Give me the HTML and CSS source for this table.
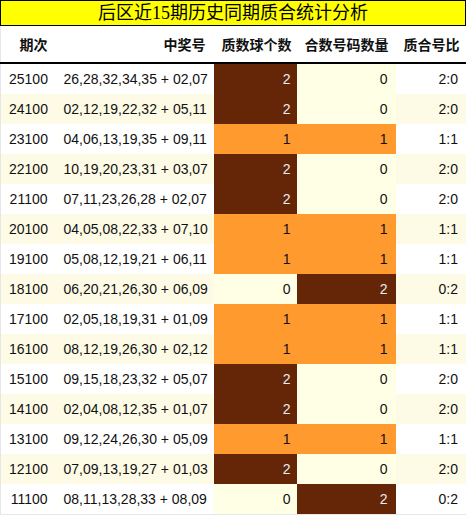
FILE: index.html
```html
<!DOCTYPE html>
<html lang="zh">
<head>
<meta charset="utf-8">
<title>后区近15期历史同期质合统计分析</title>
<link rel="stylesheet" href="styles.css">
</head>
<body>
<div class="wrap">
  <div class="title">后区近15期历史同期质合统计分析</div>
  <table class="stats">
    <colgroup>
      <col class="c1"><col class="c2"><col class="c3"><col class="c4"><col class="c5">
    </colgroup>
    <thead>
      <tr><th>期次</th><th>中奖号</th><th>质数球个数</th><th>合数号码数量</th><th>质合号比</th></tr>
    </thead>
    <tbody>
      <tr><td>25100</td><td>26,28,32,34,35 + 02,07</td><td class="v2">2</td><td class="v0">0</td><td>2:0</td></tr>
      <tr><td>24100</td><td>02,12,19,22,32 + 05,11</td><td class="v2">2</td><td class="v0">0</td><td>2:0</td></tr>
      <tr><td>23100</td><td>04,06,13,19,35 + 09,11</td><td class="v1">1</td><td class="v1">1</td><td>1:1</td></tr>
      <tr><td>22100</td><td>10,19,20,23,31 + 03,07</td><td class="v2">2</td><td class="v0">0</td><td>2:0</td></tr>
      <tr><td>21100</td><td>07,11,23,26,28 + 02,07</td><td class="v2">2</td><td class="v0">0</td><td>2:0</td></tr>
      <tr><td>20100</td><td>04,05,08,22,33 + 07,10</td><td class="v1">1</td><td class="v1">1</td><td>1:1</td></tr>
      <tr><td>19100</td><td>05,08,12,19,21 + 06,11</td><td class="v1">1</td><td class="v1">1</td><td>1:1</td></tr>
      <tr><td>18100</td><td>06,20,21,26,30 + 06,09</td><td class="v0">0</td><td class="v2">2</td><td>0:2</td></tr>
      <tr><td>17100</td><td>02,05,18,19,31 + 01,09</td><td class="v1">1</td><td class="v1">1</td><td>1:1</td></tr>
      <tr><td>16100</td><td>08,12,19,26,30 + 02,12</td><td class="v1">1</td><td class="v1">1</td><td>1:1</td></tr>
      <tr><td>15100</td><td>09,15,18,23,32 + 05,07</td><td class="v2">2</td><td class="v0">0</td><td>2:0</td></tr>
      <tr><td>14100</td><td>02,04,08,12,35 + 01,07</td><td class="v2">2</td><td class="v0">0</td><td>2:0</td></tr>
      <tr><td>13100</td><td>09,12,24,26,30 + 05,09</td><td class="v1">1</td><td class="v1">1</td><td>1:1</td></tr>
      <tr><td>12100</td><td>07,09,13,19,27 + 01,03</td><td class="v2">2</td><td class="v0">0</td><td>2:0</td></tr>
      <tr><td>11100</td><td>08,11,13,28,33 + 08,09</td><td class="v0">0</td><td class="v2">2</td><td>0:2</td></tr>
    </tbody>
  </table>
</div>
</body>
</html>
```
FILE: styles.css
```css
html, body {
  margin: 0;
  padding: 0;
  background: #ffffff;
}
.wrap {
  width: 466px;
}
.title {
  box-sizing: border-box;
  height: 26px;
  border: 1px solid #000;
  background: #ffff00;
  text-align: center;
  font-family: "Liberation Serif", "Noto Sans CJK SC", serif;
  font-size: 18px;
  line-height: 24px;
  color: #000;
}
.stats {
  width: 466px;
  border-collapse: collapse;
  table-layout: fixed;
  border: 1px solid #e6e6e6;
  border-top: none;
  font-family: "Liberation Sans", "Noto Sans CJK SC", sans-serif;
  font-size: 14px;
  color: #111;
}
.c1 { width: 55px; }
.c2 { width: 158px; }
.c3 { width: 83px; }
.c4 { width: 99px; }
.c5 { width: 71px; }
.stats th {
  height: 36px;
  padding: 0 8px;
  text-align: right;
  font-weight: bold;
  border-bottom: 2px solid #000;
  white-space: nowrap;
}
.stats th:nth-child(3) { padding-right: 6px; }
.stats td {
  height: 30px;
  padding: 0 8px;
  text-align: right;
  white-space: nowrap;
}
.stats td:nth-child(3) { padding-right: 6px; }
.stats tbody tr:nth-child(even) td {
  background: #fdfbe6;
}
.stats tbody tr td.v0 {
  background: #ffffe6;
}
.stats tbody tr td.v1 {
  background: #ff9a2e;
  color: #111;
}
.stats tbody tr td.v2 {
  background: #642607;
  color: #ececec;
}
```
